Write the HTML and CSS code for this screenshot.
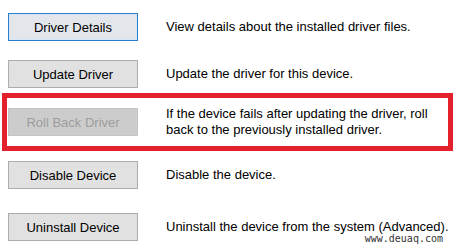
FILE: index.html
```html
<!DOCTYPE html>
<html lang="en">
<head>
  <meta charset="UTF-8" />
  <title>Driver</title>
  <link rel="stylesheet" href="styles.css">
</head>
<body>

  <main class="panel">
    <div class="row first">
      <button class="btn focused">Driver Details</button>
      <p class="desc">View details about the installed driver files.</p>
    </div>
    <div class="row second">
      <button class="btn">Update Driver</button>
      <p class="desc">Update the driver for this device.</p>
    </div>
    <div class="row highlight">
      <button class="btn" disabled>Roll Back Driver</button>
      <p class="desc wrap">If the device fails after updating the driver, roll back to the previously installed driver.</p>
    </div>
    <div class="row fourth">
      <button class="btn">Disable Device</button>
      <p class="desc">Disable the device.</p>
    </div>
    <div class="row fifth">
      <button class="btn">Uninstall Device</button>
      <p class="desc">Uninstall the device from the system (Advanced).</p>
    </div>
  </main>

  <!-- watermark -->
  <span class="watermark">www.deuaq.com</span>

</body>
</html>
```

FILE: styles.css
```css
body {
  margin: 0;
  background: #fff;
  font-family: 'Liberation Sans', Arial, sans-serif;
  color: #000;
  width: 460px;
  height: 248px;
  position: relative;
  overflow: hidden;
}
.panel {
  display: flex;
  flex-direction: column;
  padding: 13px 0 0 8px;
}
.row {
  display: flex;
  align-items: center;
  gap: 28px;
}
.second {
  margin-top: 19px;
}
.highlight {
  margin: 5px 0 0 -6px;
  width: 440px;
  padding: 8px 0 8px 1px;
  border: 5px solid #e3202b;
}
.fourth {
  margin-top: 10px;
}
.fifth {
  margin-top: 24px;
}
.btn {
  flex: none;
  width: 130px;
  height: 28px;
  margin: 0;
  padding: 0;
  font-family: inherit;
  font-size: 13px;
  color: #000;
  background: #e1e1e1;
  border: 1px solid #adadad;
}
.btn.focused {
  background: #e3e7ec;
  border: 1px solid #2b7fcf;
  box-shadow: inset 0 0 0 1px #d6e6f5;
}
.btn:disabled {
  background: #cccccc;
  border-color: #c4c4c4;
  color: #9c9c9c;
}
.desc {
  margin: 0;
  font-size: 13px;
  line-height: 16px;
  white-space: nowrap;
}
.wrap {
  width: 272px;
  white-space: normal;
}
.watermark {
  position: absolute;
  right: 17px;
  top: 233px;
  font-family: 'DejaVu Sans Mono', monospace;
  font-size: 10px;
  color: #333;
}
```
